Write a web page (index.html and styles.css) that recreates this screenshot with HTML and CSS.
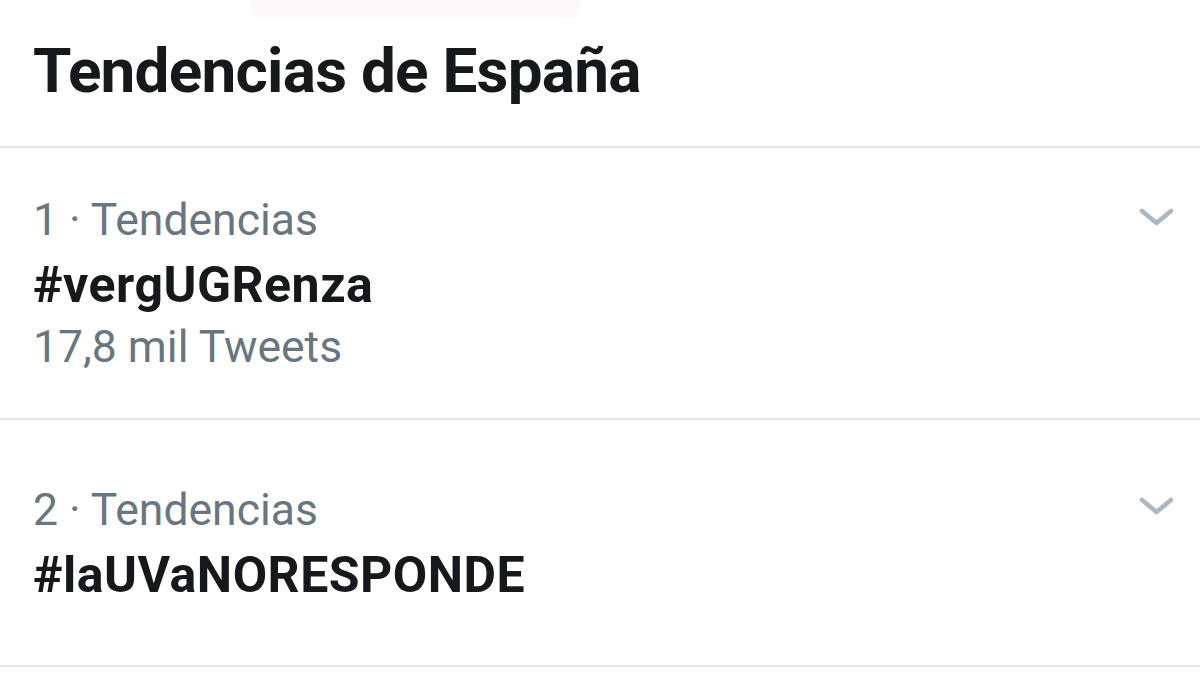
FILE: index.html
```html
<!DOCTYPE html>
<html lang="es">
<head>
<meta charset="utf-8">
<link rel="stylesheet" href="styles.css">
</head>
<body>
<div class="page">
  <div class="smear"></div>
  <header class="header">
    <h1 class="title">Tendencias de España</h1>
  </header>
  <section class="trend trend-1">
    <div class="trend-body">
      <div class="meta">1 · Tendencias</div>
      <div class="tag">#vergUGRenza</div>
      <div class="count">17,8 mil Tweets</div>
    </div>
    <svg class="chev" viewBox="0 0 35 18" width="35" height="18"><path d="M3 3 L17.5 15 L32 3" fill="none" stroke="#aab8c2" stroke-width="4.5" stroke-linecap="round" stroke-linejoin="round"/></svg>
  </section>
  <section class="trend trend-2">
    <div class="trend-body">
      <div class="meta">2 · Tendencias</div>
      <div class="tag">#laUVaNORESPONDE</div>
    </div>
    <svg class="chev" viewBox="0 0 35 18" width="35" height="18"><path d="M3 3 L17.5 15 L32 3" fill="none" stroke="#aab8c2" stroke-width="4.5" stroke-linecap="round" stroke-linejoin="round"/></svg>
  </section>
</div>
</body>
</html>
```

FILE: styles.css
```css
html, body {
  margin: 0;
  padding: 0;
  background: #ffffff;
}
body {
  font-family: Roboto, "Liberation Sans", sans-serif;
  width: 1200px;
  height: 675px;
  overflow: hidden;
}
.page {
  position: relative;
  display: flex;
  flex-direction: column;
}
.smear {
  position: absolute;
  left: 250px;
  top: 0;
  width: 330px;
  height: 18px;
  background: #fdf8f9;
  border-radius: 0 0 8px 8px;
}
.header {
  padding: 34px 33px 38px;
  border-bottom: 2px solid #e4e7ea;
}
.title {
  margin: 0;
  font-size: 62px;
  line-height: 74px;
  font-weight: 700;
  letter-spacing: -0.75px;
  color: #16181b;
}
.trend {
  display: flex;
  align-items: flex-start;
  justify-content: space-between;
  padding: 0 26px 0 33px;
  border-bottom: 2px solid #e4e7ea;
}
.trend-1 { padding-top: 38px; padding-bottom: 40px; }
.trend-2 { padding-top: 56px; padding-bottom: 59px; }
.trend-body {
  display: flex;
  flex-direction: column;
}
.meta, .count {
  font-size: 44.5px;
  color: #69767f;
}
.meta { line-height: 68px; }
.count { line-height: 62px; }
.tag {
  font-size: 50px;
  line-height: 62px;
  font-weight: 700;
  letter-spacing: 0.5px;
  color: #16181b;
}
.trend-1 .chev { margin-top: 22px; }
.trend-2 .chev { margin-top: 21px; }
```
